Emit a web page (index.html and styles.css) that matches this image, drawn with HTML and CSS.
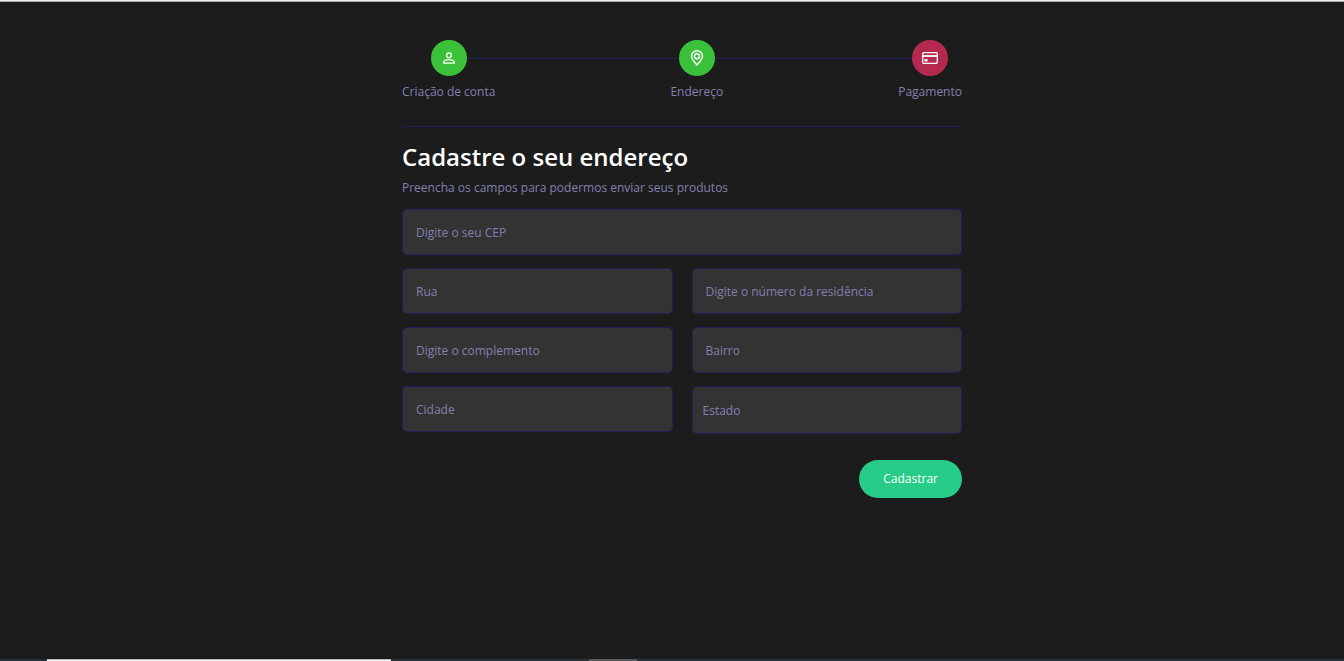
FILE: index.html
```html
<!DOCTYPE html>
<html lang="pt-BR">
<head>
<meta charset="utf-8">
<meta name="viewport" content="width=device-width, initial-scale=1">
<title>Cadastre o seu endereço</title>
<link rel="stylesheet" href="styles.css">
</head>
<body>
<div class="window-edge"></div>
<main class="page">
  <ol class="steps">
    <li class="step">
      <span class="step-icon">
        <svg width="16" height="16" viewBox="0 0 16 16" fill="none" stroke="currentColor" stroke-width="1.3"><circle cx="8" cy="5.2" r="2.4"/><path d="M2.7 13.2v-.7C2.7 10.700 5 9.700 8 9.700s5.300 1 5.300 2.800v.7z"/></svg>
      </span>
      <span class="step-label">Criação de conta</span>
    </li>
    <li class="step">
      <span class="step-icon">
        <svg width="18" height="18" viewBox="0 0 18 18" fill="none" stroke="currentColor" stroke-width="1.400"><path d="M9 16C6.200 12.800 3.500 9.800 3.500 7.200a5.500 5.500 0 0 1 11 0C14.500 9.800 11.800 12.800 9 16z"/><circle cx="9" cy="7.200" r="2.500"/></svg>
      </span>
      <span class="step-label">Endereço</span>
    </li>
    <li class="step">
      <span class="step-icon step-icon-pending">
        <svg width="18" height="18" viewBox="0 0 18 18" fill="none" stroke="currentColor" stroke-width="1.300"><rect x="1.700" y="3.700" width="14.600" height="10.600" rx="1"/><path d="M2 7h14" stroke-width="1.800"/><rect x="3.500" y="10" width="3" height="2.500" fill="currentColor" stroke="none"/></svg>
      </span>
      <span class="step-label">Pagamento</span>
    </li>
  </ol>
  <h1 class="title">Cadastre o seu endereço</h1>
  <p class="subtitle">Preencha os campos para podermos enviar seus produtos</p>
  <form class="form">
    <input class="field field-wide" type="text" placeholder="Digite o seu CEP" aria-label="CEP">
    <input class="field" type="text" placeholder="Rua" aria-label="Rua">
    <input class="field" type="text" placeholder="Digite o número da residência" aria-label="Número da residência">
    <input class="field" type="text" placeholder="Digite o complemento" aria-label="Complemento">
    <input class="field" type="text" placeholder="Bairro" aria-label="Bairro">
    <input class="field" type="text" placeholder="Cidade" aria-label="Cidade">
    <div class="select-wrap">
      <select class="field field-select" aria-label="Estado"><option>Estado</option></select>
      <svg class="chevron" width="10" height="6" viewBox="0 0 10 6" fill="none" stroke="currentColor" stroke-width="1.500"><path d="M1 1l4 4 4-4"/></svg>
    </div>
    <button class="submit" type="button">Cadastrar</button>
  </form>
</main>
<footer class="taskbar"><span class="task-search"></span><span class="task-active"></span></footer>
</body>
</html>
```
FILE: styles.css
```css
* {
  box-sizing: border-box;
}

body {
  display: flex;
  flex-direction: column;
  min-height: 100vh;
  margin: 0;
  background: #1c1c1c;
  color: #8280b0;
  font-family: "Segoe UI", "Open Sans", sans-serif;
  font-size: 12px;
  line-height: 20px;
}

.window-edge {
  height: 2px;
  border-top: 1px solid #f0f0f0;
  background: #a8a8a8;
}

.page {
  flex: 1;
  width: 100%;
  max-width: 612px;
  margin: 0 auto;
  padding: 38px 16px 38px 36px;
}

.steps {
  position: relative;
  display: flex;
  justify-content: space-between;
  margin: 0;
  padding: 0 0 24px;
  border-bottom: 1px solid #1f1f5f;
  list-style: none;
}

.steps::before {
  content: "";
  position: absolute;
  top: 18px;
  left: 48px;
  right: 32px;
  height: 1px;
  background: #1f1f5f;
}

.step {
  position: relative;
  display: flex;
  flex-direction: column;
  align-items: center;
  gap: 6px;
}

.step-icon {
  display: flex;
  align-items: center;
  justify-content: center;
  width: 36px;
  height: 36px;
  border-radius: 50%;
  background: #3bc139;
  color: #fff;
}

.step-icon-pending {
  background: #b5294e;
}

.title {
  margin: 12px 0 3px;
  color: #fff;
  font-size: 24px;
  font-weight: 600;
  line-height: 36px;
}

.subtitle {
  margin: 0 0 11px;
}

.form {
  display: grid;
  grid-template-columns: 1fr 1fr;
  gap: 13px 19px;
}

.field {
  width: 100%;
  height: 46px;
  padding: 1px 13px 0;
  border: 1px solid #20205c;
  border-radius: 5px;
  background: #333;
  color: #8280b0;
  font: inherit;
}

.field::placeholder {
  color: #8280b0;
  opacity: 1;
}

.field-wide {
  grid-column: 1 / -1;
}

.select-wrap {
  position: relative;
}

.field-select {
  display: block;
  height: 48px;
  padding: 2px 10px 0;
  appearance: none;
}

.chevron {
  position: absolute;
  top: 22px;
  right: 12px;
  color: #343a40;
  pointer-events: none;
}

.submit {
  grid-column: 2;
  justify-self: end;
  height: 38px;
  margin-top: 13px;
  padding: 0 24px;
  border: 0;
  border-radius: 19px;
  background: #26cc87;
  color: #fff;
  font: inherit;
}

.taskbar {
  display: flex;
  height: 2px;
  background: #263038;
}

.task-search {
  width: 344px;
  margin-left: 47px;
  border-top: 1px solid #b8b8b8;
  background: #f5f5f5;
}

.task-active {
  width: 48px;
  margin-left: 198px;
  background: #56595c;
}
```
